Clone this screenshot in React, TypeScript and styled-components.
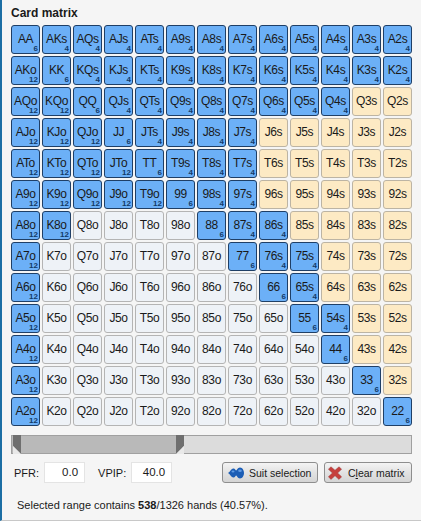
import React from 'react';
import styled, {createGlobalStyle} from "styled-components";

const GlobalStyle = createGlobalStyle`
  html, body {
    margin: 0;
    padding: 0;
    background: #f5f5f5;
  }
`

const RANKS = ["A", "K", "Q", "J", "T", "9", "8", "7", "6", "5", "4", "3", "2"];

// selected column runs per row, as [from, to, from, to]
const SELECTED: number[][] = [
    [0, 13], [0, 13], [0, 11], [0, 8], [0, 8], [0, 8],
    [0, 2, 6, 9], [0, 1, 7, 10], [0, 1, 8, 10], [0, 1, 9, 11], [0, 1, 10, 11], [0, 1, 11, 12], [0, 1, 12, 13],
];

const isSelected = (row: number, col: number) => {
    const runs = SELECTED[row];
    for (let i = 0; i < runs.length; i += 2) {
        if (col >= runs[i] && col < runs[i + 1]) return true;
    }
    return false;
};

type CellKind = "selected" | "suited" | "plain";

const Matrix = () => (
    <Grid>
        {RANKS.flatMap((_, row) => RANKS.map((_, col) => {
            const label = row === col
                ? RANKS[row] + RANKS[col]
                : row < col ? RANKS[row] + RANKS[col] + "s" : RANKS[col] + RANKS[row] + "o";
            const selected = isSelected(row, col);
            const combos = row === col ? 6 : row < col ? 4 : 12;
            const kind: CellKind = selected ? "selected" : row < col ? "suited" : "plain";
            return (
                <Cell key={label} $kind={kind}>
                    <CellLabel>{label}</CellLabel>
                    {selected && <Combos>{combos}</Combos>}
                </Cell>
            );
        }))}
    </Grid>
);

const SuitIcon = () => (
    <svg width="16" height="12" viewBox="0 0 16 12">
        <path d="M0 6 C2 5 3 2 5 1.5 C7 1 7.5 3.5 8.2 3.5 C9 3.5 9.5 .5 12 .5 C14.5 .5 16 3.5 16 6 C16 8.5 14.5 11.5 12 11.5 C9.5 11.5 9 8.5 8.2 8.5 C7.5 8.5 7 11 5 10.5 C3 10 2 7 0 6 Z" fill="#1b5db5"/>
        <ellipse cx="5" cy="4.5" rx="1.5" ry="1.1" fill="#5f9be4"/>
        <ellipse cx="12" cy="3.8" rx="1.8" ry="1.2" fill="#5f9be4"/>
    </svg>
);

const ClearIcon = () => (
    <svg width="14" height="14" viewBox="0 0 14 14">
        <path d="M3 .8 L7 4.3 L11 .8 L13.6 3.2 L9.6 7 L13.6 10.8 L11 13.4 L7 9.7 L3 13.4 L.4 10.8 L4.4 7 L.4 3.2 Z" fill="#c63f3d" stroke="#9c4444" strokeWidth="0.5"/>
    </svg>
);

const LeftThumb = () => (
    <svg width="10" height="19" viewBox="0 0 10 19">
        <path d="M1 0 H9 V19 L1 11 Z" fill="#6f6f6f"/>
        <path d="M1 11 L9 19 H1 Z" fill="#e9e9e9"/>
    </svg>
);

const RightThumb = () => (
    <svg width="10" height="19" viewBox="0 0 10 19">
        <path d="M1 0 H9 V11 L1 19 Z" fill="#6f6f6f"/>
        <path d="M9 11 V19 H1 Z" fill="#e9e9e9"/>
    </svg>
);

export default function App() {
    return (
        <Page>
            <GlobalStyle/>
            <Title>Card matrix</Title>
            <Matrix/>
            <Slider>
                <SliderFill/>
                <ThumbLeft><LeftThumb/></ThumbLeft>
                <ThumbRight><RightThumb/></ThumbRight>
            </Slider>
            <Controls>
                <FieldLabel>PFR:</FieldLabel>
                <NumberBox>0.0</NumberBox>
                <FieldLabel $gap={13}>VPIP:</FieldLabel>
                <NumberBox>40.0</NumberBox>
                <Buttons>
                    <Button $width={96} $pad={5} $gap={5}><SuitIcon/>Suit selection</Button>
                    <Button $width={88} $pad={3} $gap={6}><ClearIcon/><span>C<u>l</u>ear matrix</span></Button>
                </Buttons>
            </Controls>
            <Status>Selected range contains <b>538</b>/1326 hands (40.57%).</Status>
        </Page>
    );
}

const Page = styled.div`
  width: 421px;
  height: 521px;
  box-sizing: border-box;
  padding: 7px 9px 0 9px;
  background: #f5f5f5;
  border-left: 2px solid #1c6ea4;
  border-bottom: 1px solid #c8c8c8;
  font-family: "Liberation Sans", Arial, sans-serif;
  font-size: 11px;
  color: #1a1a1a;
  overflow: hidden;
`

const Title = styled.div`
  font-weight: bold;
  font-size: 12px;
  line-height: 13px;
  margin-bottom: 5px;
`

const Grid = styled.div`
  display: grid;
  grid-template-columns: repeat(13, 29px);
  grid-auto-rows: 29px;
  gap: 2px;
`

const CELL_COLORS = {
    selected: {bg: "#6cb0f7", border: "#1f3f66"},
    suited: {bg: "#fdeac4", border: "#bcb4a4"},
    plain: {bg: "#eef2f7", border: "#b4b4b4"},
};

const Cell = styled.div<{ $kind: CellKind }>`
  position: relative;
  box-sizing: border-box;
  display: flex;
  align-items: center;
  justify-content: center;
  padding-bottom: 1px;
  border: 1px solid ${p => CELL_COLORS[p.$kind].border};
  border-radius: 3px;
  background: ${p => CELL_COLORS[p.$kind].bg};
`

const CellLabel = styled.span`
  font-size: 12px;
  line-height: 11px;
  letter-spacing: -0.4px;
`

const Combos = styled.span`
  position: absolute;
  right: 1px;
  bottom: 0;
  font-size: 8px;
  line-height: 8px;
  font-weight: bold;
  color: #123a68;
`

const Slider = styled.div`
  position: relative;
  box-sizing: border-box;
  height: 19px;
  margin-top: 9px;
  width: 401px;
  border: 1px solid #a0a0a0;
  background: #dcdcdc;
`

const SliderFill = styled.div`
  width: 170px;
  height: 100%;
  background: #b9b9b9;
`

const ThumbLeft = styled.div`
  position: absolute;
  left: 0;
  top: -1px;
  line-height: 0;
`

const ThumbRight = styled.div`
  position: absolute;
  left: 163px;
  top: -1px;
  line-height: 0;
`

const Controls = styled.div`
  display: flex;
  align-items: center;
  margin-top: 8px;
  height: 21px;
  padding-left: 3px;
`

const FieldLabel = styled.span<{ $gap?: number }>`
  margin-left: ${p => p.$gap ?? 0}px;
  margin-right: 5px;
`

const NumberBox = styled.div`
  box-sizing: border-box;
  width: 41px;
  height: 21px;
  line-height: 19px;
  padding-right: 6px;
  text-align: right;
  background: #fff;
  border: 1px solid #e4e4e4;
  font-size: 11.5px;
`

const Buttons = styled.div`
  display: flex;
  gap: 6px;
  margin-left: auto;
`

const Button = styled.div<{ $width: number; $pad: number; $gap: number }>`
  box-sizing: border-box;
  width: ${p => p.$width}px;
  height: 21px;
  display: flex;
  align-items: center;
  gap: ${p => p.$gap}px;
  padding-left: ${p => p.$pad}px;
  border: 1px solid #8e8e8e;
  border-radius: 3px;
  background: linear-gradient(#f4f4f4, #e2e2e2 50%, #d4d4d4);
  font-size: 10.5px;
  white-space: nowrap;
`

const Status = styled.div`
  margin-top: 15px;
  padding-left: 6px;
  line-height: 14px;
`
